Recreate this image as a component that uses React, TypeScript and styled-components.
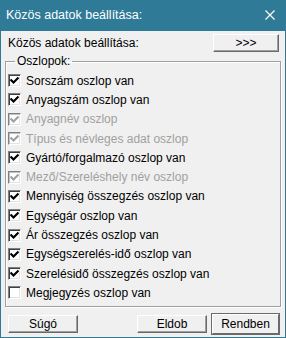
import React from 'react';
import styled, { createGlobalStyle } from 'styled-components';

const GlobalStyle = createGlobalStyle`
  html, body {
    margin: 0;
    padding: 0;
    background: #ffffff;
  }
  * {
    box-sizing: border-box;
  }
`;

const Window = styled.div`
  width: 286px;
  height: 338px;
  background: #2e7a97;
  display: flex;
  flex-direction: column;
  font-family: "Liberation Sans", Arial, sans-serif;
  font-size: 12px;
  color: #000;
`;

const TitleBar = styled.div`
  height: 31px;
  display: flex;
  align-items: center;
  justify-content: space-between;
  padding: 0 11px 2px 6px;
  color: #ffffff;
  font-size: 12.5px;
`;

const Body = styled.div`
  flex: 1;
  margin: 0 1px 1px 1px;
  background: #f0f0f0;
  display: flex;
  flex-direction: column;
`;

const TopRow = styled.div`
  display: flex;
  align-items: center;
  justify-content: space-between;
  padding: 3px 6px 0 7px;
  height: 20px;
`;

const Button = styled.button<{ $primary?: boolean; $width: number }>`
  width: ${p => p.$width}px;
  height: ${p => (p.$primary ? 20 : 18)}px;
  padding: 0;
  margin: 0;
  font-family: "Liberation Sans", Arial, sans-serif;
  font-size: 12px;
  color: #000;
  background: #f0f0f0;
  border: 1px solid;
  border-color: #ffffff #696969 #696969 #ffffff;
  box-shadow: ${p =>
    p.$primary
      ? '0 0 0 1px #6a6a6a'
      : 'inset -1px -1px 0 #a0a0a0'};
  display: flex;
  align-items: center;
  justify-content: center;
`;

const Group = styled.fieldset`
  margin: 3px 4px 0 4px;
  padding: 3px 2px 3px 2px;
  border: 1px solid #a0a0a0;
  box-shadow: inset 1px 1px 0 #ffffff, 1px 1px 0 #ffffff;
  min-width: 0;
`;

const Legend = styled.legend`
  padding: 0 2px;
  margin-left: 7px;
`;

const Row = styled.div<{ $disabled?: boolean }>`
  height: 19.3px;
  display: flex;
  align-items: center;
  gap: 5px;
  color: ${p => (p.$disabled ? '#a0a0a0' : '#000')};
  white-space: nowrap;
`;

const Box = styled.span<{ $disabled?: boolean }>`
  width: 13px;
  height: 13px;
  flex: none;
  background: #ffffff;
  border: 1px solid;
  border-color: #808080 #ffffff #ffffff #808080;
  box-shadow: inset 1px 1px 0 ${p => (p.$disabled ? '#c0c0c0' : '#404040')},
    inset -1px -1px 0 #e3e3e3;
  display: flex;
  align-items: center;
  justify-content: center;
`;

const Footer = styled.div`
  display: flex;
  justify-content: space-between;
  align-items: center;
  padding: 7px 6px 0 7px;
`;

const ButtonGroup = styled.div`
  display: flex;
  gap: 5px;
  align-items: center;
`;

const Close = () => (
  <svg width="10" height="10" viewBox="0 0 10 10">
    <path d="M0.5 0.5 L9.5 9.5 M9.5 0.5 L0.5 9.5" stroke="#ffffff" strokeWidth="1.2" />
  </svg>
);

const Check = ({ color }: { color: string }) => (
  <svg width="9" height="9" viewBox="0 0 9 9">
    <path d="M0.5 3.5 L3.5 6.5 L8.5 1.5" stroke={color} strokeWidth="2.2" fill="none" />
  </svg>
);

const items: { label: string; checked: boolean; disabled?: boolean }[] = [
  { label: 'Sorszám oszlop van', checked: true },
  { label: 'Anyagszám oszlop van', checked: true },
  { label: 'Anyagnév oszlop', checked: true, disabled: true },
  { label: 'Típus és névleges adat oszlop', checked: true, disabled: true },
  { label: 'Gyártó/forgalmazó oszlop van', checked: true },
  { label: 'Mező/Szereléshely név oszlop', checked: true, disabled: true },
  { label: 'Mennyiség összegzés oszlop van', checked: true },
  { label: 'Egységár oszlop van', checked: true },
  { label: 'Ár összegzés oszlop van', checked: true },
  { label: 'Egységszerelés-idő oszlop van', checked: true },
  { label: 'Szerelésidő összegzés oszlop van', checked: true },
  { label: 'Megjegyzés oszlop van', checked: false },
];

function App() {
  return (
    <>
      <GlobalStyle />
      <Window>
        <TitleBar>
          <span>Közös adatok beállítása:</span>
          <Close />
        </TitleBar>
        <Body>
          <TopRow>
            <span>Közös adatok beállítása:</span>
            <Button $width={66}>&gt;&gt;&gt;</Button>
          </TopRow>
          <Group>
            <Legend>Oszlopok:</Legend>
            {items.map(it => (
              <Row key={it.label} $disabled={it.disabled}>
                <Box $disabled={it.disabled}>
                  {it.checked && <Check color={it.disabled ? '#a0a0a0' : '#000'} />}
                </Box>
                <span>{it.label}</span>
              </Row>
            ))}
          </Group>
          <Footer>
            <Button $width={70}>Súgó</Button>
            <ButtonGroup>
              <Button $width={70}>Eldob</Button>
              <Button $width={67} $primary>Rendben</Button>
            </ButtonGroup>
          </Footer>
        </Body>
      </Window>
    </>
  );
}

export default App;
